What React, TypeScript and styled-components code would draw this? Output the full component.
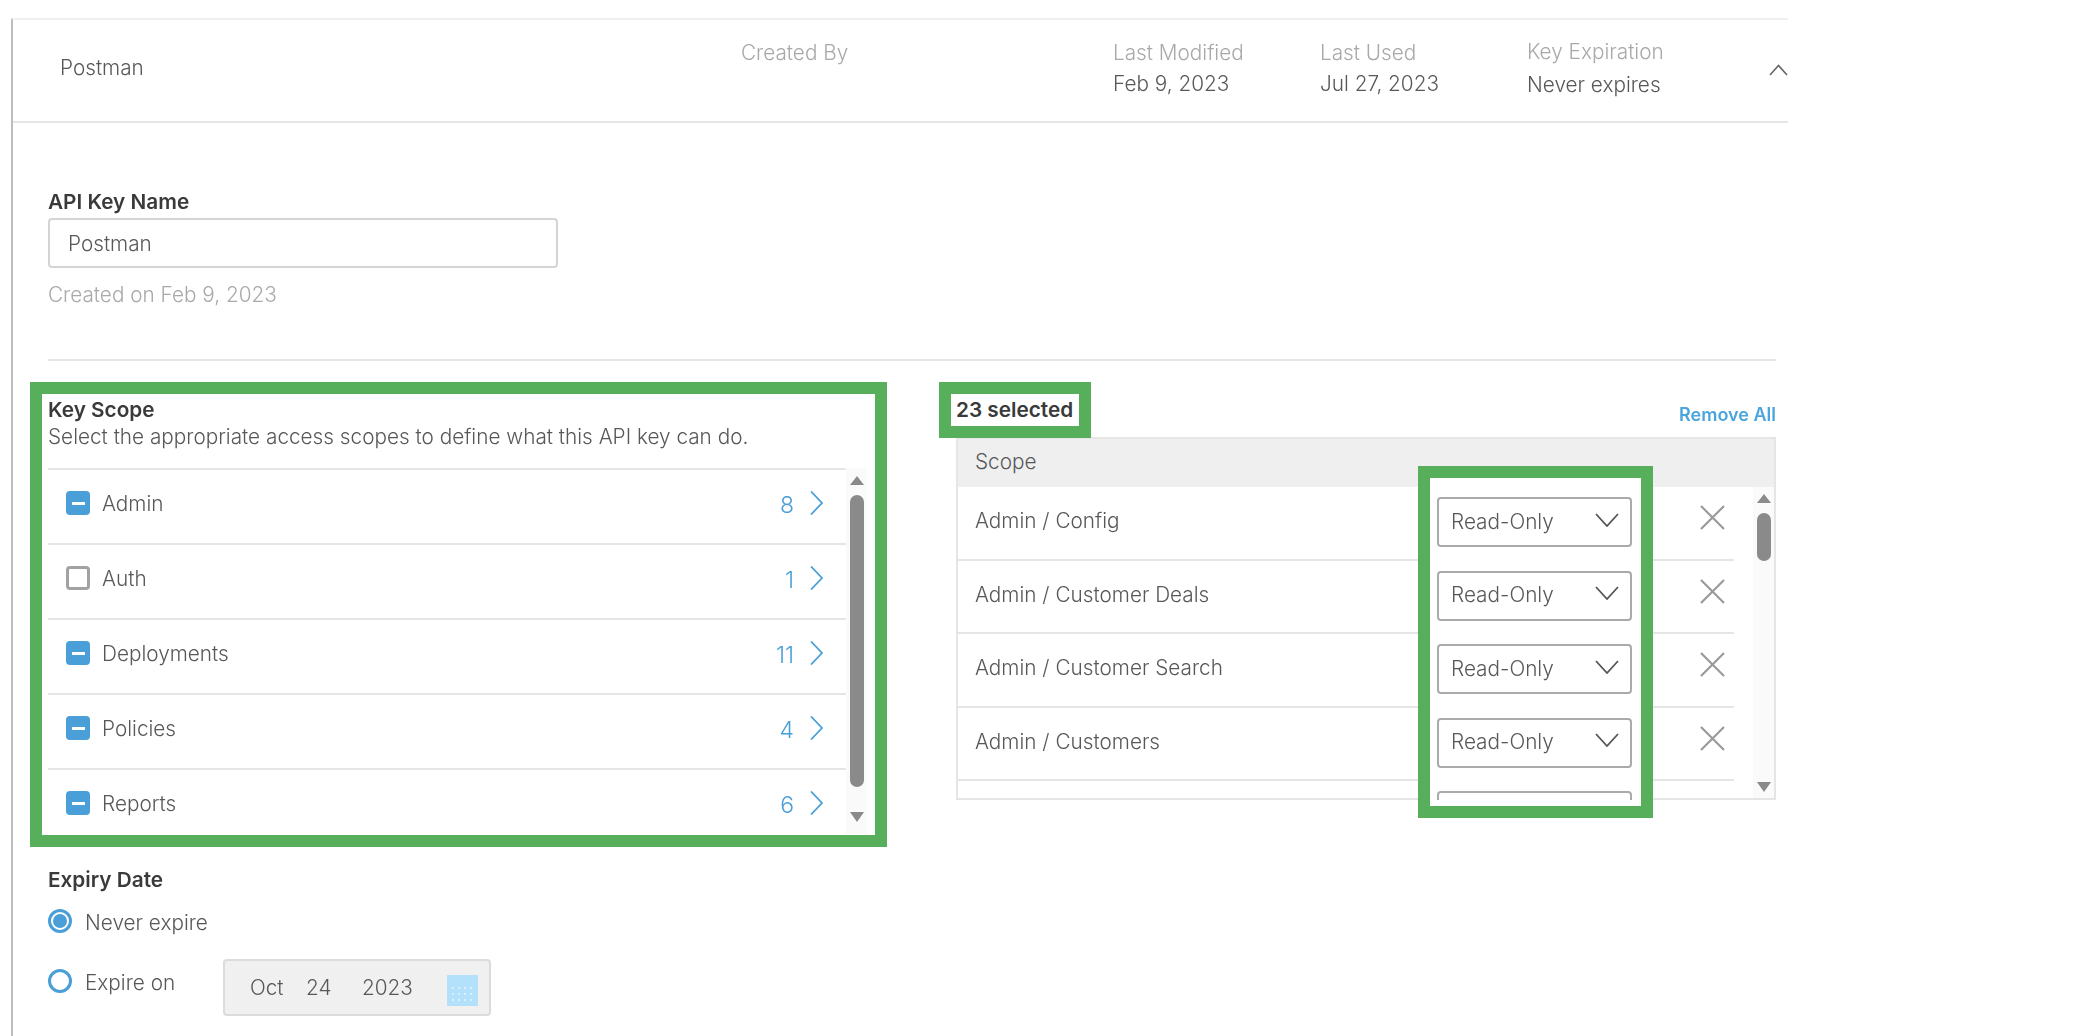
import React from "react";
import styled, { createGlobalStyle } from "styled-components";

const Global = createGlobalStyle`
  html, body { margin: 0; padding: 0; background: #fff; }
  body { font-family: Inter, "Open Sans", "Liberation Sans", sans-serif; font-weight: 300; font-size: 20.75px; color: #58585b; }
  * { box-sizing: border-box; }
`;

const GREEN = "#57ae5b";
const BLUE = "#4a9fd8";
const LINE = "#e5e5e5";

const Page = styled.div`
  width: 2090px;
  height: 1036px;
  overflow: hidden;
  padding: 18px 0 0 11px;
  filter: blur(0.4px);
`;
const Card = styled.section`
  width: 1777px;
  height: 1018px;
  border-top: 2px solid #f0f0f0;
  border-left: 2px solid #bdbdbd;
`;
const Header = styled.header`
  display: grid;
  grid-template-columns: 47px 681px 372px 207px 207px 242px 19px;
  height: 103px;
  padding-top: 18px;
  border-bottom: 2px solid ${LINE};
  line-height: 30px;
`;
const HeaderName = styled.div`
  grid-column: 2;
  padding-top: 15px;
`;
const HeaderCell = styled.div<{ $spread?: boolean }>`
  display: flex;
  flex-direction: column;
  gap: ${(p) => (p.$spread ? "3px" : "1px")};
  margin-top: ${(p) => (p.$spread ? "-1px" : "0")};
`;
const Muted = styled.span`
  color: #a9a9ab;
`;
const Collapse = styled.svg`
  width: 19px;
  height: 12px;
  margin-top: 26px;
`;
const Body = styled.div`
  padding: 67px 12px 0 35px;
`;
const FieldLabel = styled.div`
  font-weight: 600;
  font-size: 20.75px;
  line-height: 24px;
  color: #3a3a3c;
`;
const NameInput = styled.div`
  width: 510px;
  height: 50px;
  margin-top: 4px;
  padding-left: 18px;
  display: flex;
  align-items: center;
  border: 2px solid #d4d4d4;
  border-radius: 4px;
`;
const CreatedOn = styled.div`
  margin-top: 15px;
  line-height: 24px;
  color: #a9a9ab;
`;
const Divider = styled.hr`
  margin: 52px 0 21px;
  height: 2px;
  border: 0;
  background: ${LINE};
`;
const Columns = styled.div`
  display: flex;
  gap: 52px;
  margin-left: -18px;
`;
const ScopePicker = styled.div`
  width: 857px;
  height: 465px;
  padding: 4px 0 0 6px;
  border: 12px solid ${GREEN};
  overflow: hidden;
`;
const Description = styled.div`
  margin: 3px 0 19px;
  line-height: 24px;
  white-space: nowrap;
`;
const ListFrame = styled.div`
  display: flex;
  height: 366px;
`;
const List = styled.div`
  width: 798px;
  overflow: hidden;
`;
const ListRow = styled.div`
  height: 75px;
  padding: 0 23px 7px 18px;
  border-top: 2px solid ${LINE};
  display: flex;
  align-items: center;
  gap: 12px;
`;
const Check = styled.span<{ $on: boolean }>`
  flex: none;
  width: 24px;
  height: 24px;
  border-radius: 4px;
  display: flex;
  align-items: center;
  justify-content: center;
  background: ${(p) => (p.$on ? BLUE : "#fff")};
  border: ${(p) => (p.$on ? "none" : "3px solid #a2a2a2")};
  &::after {
    content: "";
    display: ${(p) => (p.$on ? "block" : "none")};
    width: 13px;
    height: 3px;
    background: #fff;
  }
`;
const RowLabel = styled.span`
  flex: 1;
`;
const Count = styled.span`
  color: ${BLUE};
  font-size: 23px;
  margin: 4px 4px 0 0;
`;
const Scrollbar = styled.div<{ $top: number; $bottom: number; $width: number }>`
  flex: none;
  width: ${(p) => p.$width}px;
  height: 100%;
  padding: ${(p) => p.$top}px 0 ${(p) => p.$bottom}px;
  background: #fafafa;
  display: flex;
  flex-direction: column;
  align-items: center;
`;
const ArrowUp = styled.span`
  border: 7.5px solid transparent;
  border-top: 0;
  border-bottom: 9px solid #8a8a8a;
`;
const ArrowDown = styled.span`
  margin-top: auto;
  border: 7.5px solid transparent;
  border-bottom: 0;
  border-top: 10px solid #8a8a8a;
`;
const Thumb = styled.span<{ $height: number }>`
  width: 14px;
  height: ${(p) => p.$height}px;
  margin-top: 10px;
  border-radius: 7px;
  background: #8a8a8a;
`;
const ExpiryLabel = styled(FieldLabel)`
  margin-top: 21px;
  margin-left: 18px;
`;
const Options = styled.div`
  margin: 17px 0 0 18px;
  display: flex;
  flex-direction: column;
  gap: 24px;
`;
const Option = styled.div`
  display: flex;
  align-items: flex-start;
`;
const Radio = styled.span<{ $on?: boolean; $offset: number }>`
  flex: none;
  width: 24px;
  height: 24px;
  margin: ${(p) => p.$offset}px 13px 0 0;
  border-radius: 50%;
  border: 3px solid ${BLUE};
  display: flex;
  align-items: center;
  justify-content: center;
  &::after {
    content: "";
    display: ${(p) => (p.$on ? "block" : "none")};
    width: 14px;
    height: 14px;
    border-radius: 50%;
    background: ${BLUE};
  }
`;
const OptionText = styled.span<{ $offset: number; $width?: number }>`
  line-height: 24px;
  margin-top: ${(p) => p.$offset}px;
  width: ${(p) => (p.$width ? `${p.$width}px` : "auto")};
`;
const DateBox = styled.div`
  width: 268px;
  height: 57px;
  padding: 0 11px 0 25px;
  display: flex;
  align-items: center;
  background: #f0f0f0;
  border: 2px solid #dcdcdc;
  border-radius: 4px;
`;
const DatePart = styled.span`
  width: 56px;
`;
const CalendarIcon = styled.svg`
  width: 31px;
  height: 31px;
  margin: 5px 0 0 auto;
`;
const SelectedPanel = styled.div`
  width: 837px;
`;
const SelectedHead = styled.div`
  display: flex;
  justify-content: space-between;
  align-items: flex-start;
  height: 55px;
`;
const SelectedCount = styled.div`
  position: relative;
  z-index: 2;
  width: 152px;
  height: 56px;
  padding-left: 5px;
  border: 12px solid ${GREEN};
  background: #fff;
  color: #3a3a3c;
  font-weight: 600;
  font-size: 20.75px;
  line-height: 32px;
  white-space: nowrap;
`;
const RemoveAll = styled.a`
  margin-top: 21px;
  color: #4aa5dc;
  font-weight: 600;
  font-size: 18px;
  line-height: 24px;
`;
const Table = styled.div`
  position: relative;
  width: 820px;
  height: 363px;
  margin-left: 17px;
  border: 2px solid ${LINE};
`;
const TableHead = styled.div`
  height: 48px;
  padding: 0 0 3px 17px;
  display: flex;
  align-items: center;
  background: #efefef;
`;
const TableBody = styled.div`
  display: flex;
  justify-content: space-between;
  height: 311px;
  overflow: hidden;
`;
const TableRows = styled.div`
  width: 776px;
`;
const TableRow = styled.div`
  height: 73.6px;
  padding: 18px 9px 0 17px;
  display: flex;
  justify-content: space-between;
  align-items: flex-start;
  line-height: 32px;
  border-bottom: 2px solid ${LINE};
`;
const RemoveIcon = styled.svg`
  width: 25px;
  height: 25px;
`;
const SelectOverlay = styled.div`
  position: absolute;
  left: 460px;
  top: 27px;
  width: 235px;
  height: 352px;
  border: 12px solid ${GREEN};
  background: #fff;
`;
const SelectClip = styled.div`
  height: 322px;
  padding: 19px 0 0 7px;
  overflow: hidden;
  display: flex;
  flex-direction: column;
  gap: 23.6px;
`;
const Select = styled.div`
  flex: none;
  width: 195px;
  height: 50px;
  padding: 0 11px 2px 12px;
  display: flex;
  align-items: center;
  justify-content: space-between;
  border: 2px solid #aaaaac;
  border-radius: 4px;
`;
const SelectChevron = styled.svg`
  width: 24px;
  height: 14px;
  margin-top: -3px;
`;

const groups: [string, number, boolean][] = [
  ["Admin", 8, true],
  ["Auth", 1, false],
  ["Deployments", 11, true],
  ["Policies", 4, true],
  ["Reports", 6, true],
];
const scopes = ["Admin / Config", "Admin / Customer Deals", "Admin / Customer Search", "Admin / Customers", ""];

export default function App() {
  return (
    <Page>
      <Global />
      <Card>
        <Header>
          <HeaderName>Postman</HeaderName>
          <HeaderCell><Muted>Created By</Muted></HeaderCell>
          <HeaderCell><Muted>Last Modified</Muted><span>Feb 9, 2023</span></HeaderCell>
          <HeaderCell><Muted>Last Used</Muted><span>Jul 27, 2023</span></HeaderCell>
          <HeaderCell $spread><Muted>Key Expiration</Muted><span>Never expires</span></HeaderCell>
          <Collapse viewBox="0 0 19 12"><path d="M1 11 9.5 1.5 18 11" fill="none" stroke="#666" strokeWidth="1.6" /></Collapse>
        </Header>
        <Body>
          <FieldLabel>API Key Name</FieldLabel>
          <NameInput>Postman</NameInput>
          <CreatedOn>Created on Feb 9, 2023</CreatedOn>
          <Divider />
          <Columns>
            <div>
              <ScopePicker>
                <FieldLabel>Key Scope</FieldLabel>
                <Description>Select the appropriate access scopes to define what this API key can do.</Description>
                <ListFrame>
                  <List>
                    {groups.map(([name, count, on]) => (
                      <ListRow key={name}>
                        <Check $on={on} />
                        <RowLabel>{name}</RowLabel>
                        <Count>{count}</Count>
                        <svg width="13" height="24" viewBox="0 0 13 24"><path d="M1 0.5 12 12 1 23.5" fill="none" stroke={BLUE} strokeWidth="1.8" /></svg>
                      </ListRow>
                    ))}
                  </List>
                  <Scrollbar $top={8} $bottom={12} $width={21}>
                    <ArrowUp />
                    <Thumb $height={292} />
                    <ArrowDown />
                  </Scrollbar>
                </ListFrame>
              </ScopePicker>
              <ExpiryLabel>Expiry Date</ExpiryLabel>
              <Options>
                <Option>
                  <Radio $on $offset={0} />
                  <OptionText $offset={2}>Never expire</OptionText>
                </Option>
                <Option>
                  <Radio $offset={10} />
                  <OptionText $offset={12} $width={138}>Expire on</OptionText>
                  <DateBox>
                    <DatePart>Oct</DatePart>
                    <DatePart>24</DatePart>
                    <span>2023</span>
                    <CalendarIcon viewBox="0 0 31 31">
                      <rect width="31" height="31" fill="#b3e0fb" />
                      <g fill="#d8effd">
                        {[8, 14, 20, 26].flatMap((x) => [13, 19, 25].map((y) => <rect key={`${x}-${y}`} x={x - 3} y={y - 1} width="2" height="2" />))}
                      </g>
                    </CalendarIcon>
                  </DateBox>
                </Option>
              </Options>
            </div>
            <SelectedPanel>
              <SelectedHead>
                <SelectedCount>23 selected</SelectedCount>
                <RemoveAll>Remove All</RemoveAll>
              </SelectedHead>
              <Table>
                <TableHead>Scope</TableHead>
                <TableBody>
                  <TableRows>
                    {scopes.map((scope, i) => (
                      <TableRow key={i}>
                        <span>{scope}</span>
                        {scope && (
                          <RemoveIcon viewBox="0 0 25 25"><path d="M1 1 24 24M24 1 1 24" stroke="#9a9a9a" strokeWidth="2.2" /></RemoveIcon>
                        )}
                      </TableRow>
                    ))}
                  </TableRows>
                  <Scrollbar $top={7} $bottom={6} $width={21}>
                    <ArrowUp />
                    <Thumb $height={48} />
                    <ArrowDown />
                  </Scrollbar>
                </TableBody>
                <SelectOverlay>
                  <SelectClip>
                    {scopes.map((scope, i) => (
                      <Select key={i}>
                        {scope && "Read-Only"}
                        {scope && (
                          <SelectChevron viewBox="0 0 24 14"><path d="M1 1 12 13 23 1" fill="none" stroke="#555" strokeWidth="1.8" /></SelectChevron>
                        )}
                      </Select>
                    ))}
                  </SelectClip>
                </SelectOverlay>
              </Table>
            </SelectedPanel>
          </Columns>
        </Body>
      </Card>
    </Page>
  );
}
